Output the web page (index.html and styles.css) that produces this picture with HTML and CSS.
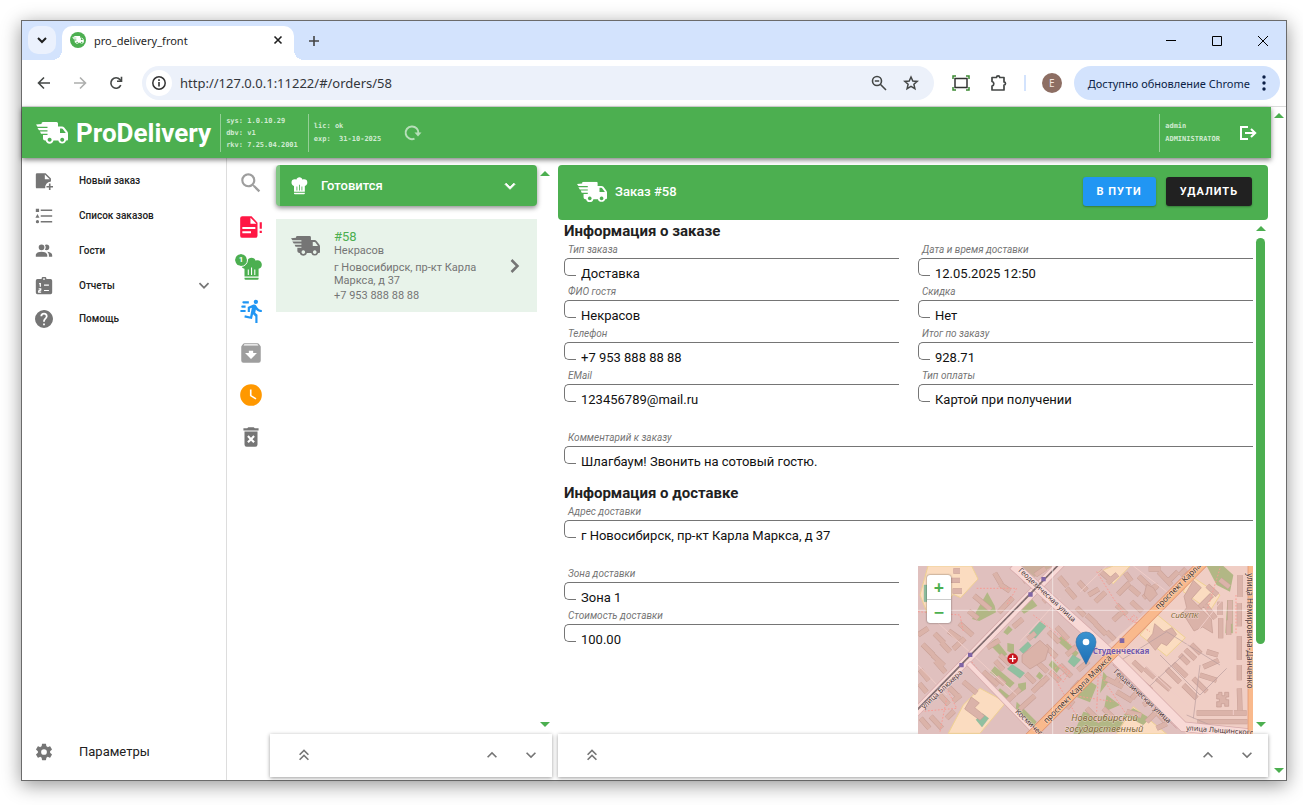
FILE: index.html
```html
<!DOCTYPE html>
<html lang="ru">
<head>
<meta charset="utf-8">
<title>pro_delivery_front</title>
<link rel="stylesheet" href="styles.css">
</head>
<body>
<svg class="sprite" aria-hidden="true">
  <symbol id="truck" viewBox="0 0 32 22">
    <path fill-rule="evenodd" d="M5.500 2V1.500Q5.500 0 7 0H20.500Q22 0 22 1.500V4.500H26Q27.300 4.500 28.200 5.500L31 9Q32 10.200 32 11.500V17.500Q32 18.600 31 18.600H30A4 4 0 0 1 22.300 18.600H17.500A4 4 0 0 1 9.700 18.600H9Q7 18.600 7 16.600V13H11.500V11.800H5L4 9.500H11.500V8.200H3L1.500 6H11.500V4.700H1.500L0 2.500ZM24 6.500V11H29.800L26.800 6.900Q26.500 6.500 26 6.500ZM13.600 15.800a2 2 0 1 0 .01 0ZM26.200 15.800a2 2 0 1 0 .01 0Z"/>
  </symbol>
  <symbol id="chef" viewBox="0 0 24 24"><path d="M12.500 1.500C10.730 1.500 9.170 2.670 8.670 4.370C8.140 4.130 7.580 4 7 4A4 4 0 0 0 3 8C3 9.820 4.240 11.410 6 11.870V19H19V11.870C20.760 11.410 22 9.820 22 8A4 4 0 0 0 18 4C17.420 4 16.860 4.130 16.330 4.370C15.830 2.670 14.270 1.500 12.500 1.500M12 10.500H13V17.500H12V10.500M9 12.500H10V17.500H9V12.500M15 12.500H16V17.500H15V12.500M6 20V21A1 1 0 0 0 7 22H18A1 1 0 0 0 19 21V20H6Z"/></symbol>
  <symbol id="down" viewBox="0 0 24 24"><path d="M7.410 8.580L12 13.170L16.590 8.580L18 10L12 16L6 10L7.410 8.580Z"/></symbol>
  <symbol id="up" viewBox="0 0 24 24"><path d="M7.410 15.410L12 10.830L16.590 15.410L18 14L12 8L6 14L7.410 15.410Z"/></symbol>
  <symbol id="dblup" viewBox="0 0 24 24"><path d="M7.410 18.410L6 17L12 11L18 17L16.590 18.410L12 13.830L7.410 18.410M7.410 12.410L6 11L12 5L18 11L16.590 12.410L12 7.830L7.410 12.410Z"/></symbol>
</svg>

<div class="window">
  <div class="tabstrip">
    <button class="tab-search" aria-label="Поиск вкладок"><svg width="12" height="12" viewBox="0 0 12 12" fill="none" stroke="#1f1f1f" stroke-width="2"><path d="M2 4l4 4 4-4"/></svg></button>
    <div class="tab">
      <svg width="16" height="16" viewBox="0 0 16 16"><circle cx="8" cy="8" r="8" fill="#4caf50"/><svg x="2" y="4" width="12" height="8" fill="#fff"><use href="#truck"/></svg></svg>
      <span class="tab-title">pro_delivery_front</span>
      <button class="plain" aria-label="Закрыть вкладку"><svg width="10" height="10" viewBox="0 0 10 10" stroke="#1f1f1f" stroke-width="1.600"><path d="M1.500 1.500l7 7M8.500 1.500L1.500 8.500"/></svg></button>
    </div>
    <button class="plain new-tab" aria-label="Новая вкладка"><svg width="12" height="12" viewBox="0 0 12 12" stroke="#444" stroke-width="1.600"><path d="M6 1v10M1 6h10"/></svg></button>
    <div class="win-controls">
      <button class="plain" aria-label="Свернуть"><svg width="12" height="12" viewBox="0 0 12 12" stroke="#000"><path d="M1 5.500h10"/></svg></button>
      <button class="plain" aria-label="Развернуть"><svg width="12" height="12" viewBox="0 0 12 12" stroke="#000" fill="none"><path d="M1.500 1.500h9v9h-9z"/></svg></button>
      <button class="plain" aria-label="Закрыть"><svg width="12" height="12" viewBox="0 0 12 12" stroke="#000"><path d="M1 1l10 10M11 1L1 11"/></svg></button>
    </div>
  </div>

  <div class="toolbar">
    <div class="nav-buttons">
      <button class="plain" aria-label="Назад"><svg width="14" height="14" viewBox="0 0 14 14" fill="none" stroke="#444746" stroke-width="1.600"><path d="M13 7H2M7 1.500L1.500 7L7 12.500"/></svg></button>
      <button class="plain" aria-label="Вперёд"><svg width="14" height="14" viewBox="0 0 14 14" fill="none" stroke="#adaead" stroke-width="1.600"><path d="M1 7h11M7 1.500L12.500 7L7 12.500"/></svg></button>
      <button class="plain" aria-label="Обновить"><svg width="14" height="14" viewBox="0 0 14 14" fill="none" stroke="#444746" stroke-width="1.600"><path d="M11.800 9.200A5.200 5.200 0 1 1 11 3.600L12.200 4.900"/><path d="M12.500 .8V5.300H8"/></svg></button>
    </div>
    <div class="omnibox">
      <button class="site-info" aria-label="Сведения о сайте"><svg width="16" height="16" viewBox="0 0 16 16" fill="none" stroke="#333" stroke-width="2"><circle cx="8" cy="8" r="6.200" stroke-width="1.500"/><path d="M8 7v4.500M8 4.300v1.700" stroke-width="1.600"/></svg></button>
      <input class="url" aria-label="Адрес" value="http://127.0.0.1:11222/#/orders/58">
      <button class="plain" aria-label="Масштаб"><svg width="16" height="16" viewBox="0 0 16 16" fill="none" stroke="#444746" stroke-width="1.600"><circle cx="6" cy="6" r="4.500"/><path d="M9.300 9.300L15 15M3.800 6h4.400"/></svg></button>
      <button class="plain" aria-label="Закладка"><svg width="16" height="16" viewBox="0 0 16 16" fill="none" stroke="#444746" stroke-width="1.500"><path d="M8 2l1.800 4 4.400.4-3.300 2.900 1 4.300L8 11.300l-3.900 2.300 1-4.300L1.800 6.400 6.200 6z"/></svg></button>
    </div>
    <button class="plain" aria-label="Снимок экрана"><svg width="18" height="16" viewBox="0 0 18 16" fill="none"><path d="M3 3.500h12v9H3z" stroke="#333" stroke-width="1.500"/><path d="M1 4V1h3M14 1h3v3M17 12v3h-3M4 15H1v-3" stroke="#3c8a33" stroke-width="1.500"/></svg></button>
    <button class="plain extensions" aria-label="Расширения"><svg width="18" height="18" viewBox="0 0 18 18" fill="none" stroke="#444746" stroke-width="1.700" stroke-linejoin="round"><path d="M2 3.500h4.500a1.500 1.500 0 0 1 3.200 0H14V8a1.500 1.500 0 0 1 0 3v5H2v-4a2.300 2.300 0 0 0 0-4.500z"/></svg></button>
    <span class="tool-divider"></span>
    <button class="avatar" aria-label="Профиль">E</button>
    <button class="update"><span>Доступно обновление Chrome</span><svg width="4" height="16" viewBox="0 0 4 16" fill="#0b1f47"><circle cx="2" cy="2" r="1.700"/><circle cx="2" cy="8" r="1.700"/><circle cx="2" cy="14" r="1.700"/></svg></button>
  </div>

  <div class="viewport">
    <div class="app">
      <header class="app-bar">
        <svg class="logo" viewBox="0 0 32 22"><use href="#truck"/></svg>
        <h1>ProDelivery</h1>
        <div class="meta meta-system"><span>sys: 1.0.10.29</span><span>dbv: v1</span><span>rkv: 7.25.04.2001</span></div>
        <div class="meta meta-license"><span>lic: ok</span><span>exp:&nbsp; 31-10-2025</span></div>
        <button class="plain reload" aria-label="Обновить"><svg width="18" height="16" viewBox="0 0 18 16" fill="none" stroke="#b7dfb9" stroke-width="2"><path d="M10.500 13.700A6.400 6.400 0 1 1 14.400 8.500"/><path d="M10.500 7.500h7l-3.500 4z" fill="#b7dfb9" stroke="none"/></svg></button>
        <div class="meta meta-user"><span>admin</span><span>ADMINISTRATOR</span></div>
        <button class="plain logout" aria-label="Выйти"><svg width="18" height="16" viewBox="0 0 18 16" fill="none" stroke="#fff" stroke-width="2"><path d="M9 2H2v12h7M6 8h10M12 4l4.200 4L12 12"/></svg></button>
      </header>

      <div class="workspace">
        <nav class="sidebar">
          <a href="#new"><svg class="ico" viewBox="1 1 22 22"><path d="M3.500 2.500H14L20.500 9V12.500Q13 13.500 13.500 21H3.500Q2 21 2 19.500V4Q2 2.500 3.500 2.500M13 4v6h6zM18 15h2v3h3v2h-3v3h-2v-3h-3v-2h3z" fill-rule="evenodd"/></svg><span>Новый заказ</span></a>
          <a href="#list"><svg class="ico" viewBox="1 1 22 22"><path d="M4 9.500L6.500 14H1.500L4 9.500M2 3H6V7H2V3M4 21A2 2 0 0 0 6 19A2 2 0 0 0 4 17A2 2 0 0 0 4 21M8 4V6H22V4H8M8 20H22V18H8V20M8 13H22V11H8V13Z"/></svg><span>Список заказов</span></a>
          <a href="#guests"><svg class="ico" viewBox="1 1 22 22"><path d="M16 17V19H2V17S2 13 9 13 16 17 16 17M12.500 7.500A3.500 3.500 0 1 0 9 11A3.500 3.500 0 0 0 12.500 7.500M15.940 13A5.320 5.320 0 0 1 18 17V19H22V17S22 13.370 15.940 13M15 4A3.390 3.390 0 0 0 13.070 4.590A5 5 0 0 1 13.070 10.410A3.390 3.390 0 0 0 15 11A3.500 3.500 0 0 0 15 4Z"/></svg><span>Гости</span></a>
          <a href="#reports"><svg class="ico" viewBox="1 1 22 22"><path d="M4 3.500h5a3 3 0 0 1 6 0h5q2 0 2 2V20q0 2-2 2H4q-2 0-2-2V5.500q0-2 2-2M12 2.500a1 1 0 1 0 .01 0" fill-rule="evenodd"/><path d="M6 9h1.500v4M5.500 15.500h2.500v1.500l-2.500 1v1.500h3M12 11h6M12 17.500h6" fill="none" stroke="#fff" stroke-width="1.500"/></svg><span>Отчеты</span><svg class="expand" viewBox="5 7 14 10"><use href="#down" x="0" y="0" width="24" height="24"/></svg></a>
          <a class="help" href="#help"><svg class="ico" viewBox="2 2 20 20"><path d="M15.070 11.250L14.170 12.170C13.450 12.890 13 13.500 13 15H11V14.500C11 13.390 11.450 12.390 12.170 11.670L13.410 10.410C13.780 10.050 14 9.550 14 9C14 7.890 13.100 7 12 7A2 2 0 0 0 10 9H8A4 4 0 0 1 12 5A4 4 0 0 1 16 9C16 9.880 15.640 10.670 15.070 11.250M13 19H11V17H13M12 2A10 10 0 0 0 2 12A10 10 0 0 0 12 22A10 10 0 0 0 22 12C22 6.470 17.500 2 12 2Z"/></svg><span>Помощь</span></a>
          <a class="settings" href="#settings"><svg class="ico" viewBox="1 1 22 22"><path d="M12 15.500A3.500 3.500 0 0 1 8.500 12A3.500 3.500 0 0 1 12 8.500A3.500 3.500 0 0 1 15.500 12A3.500 3.500 0 0 1 12 15.500M19.430 12.970C19.470 12.650 19.500 12.330 19.500 12C19.500 11.670 19.470 11.340 19.430 11L21.540 9.370C21.730 9.220 21.780 8.950 21.660 8.730L19.660 5.270C19.540 5.050 19.270 4.960 19.050 5.050L16.560 6.050C16.040 5.660 15.500 5.320 14.870 5.070L14.500 2.420C14.460 2.180 14.250 2 14 2H10C9.750 2 9.540 2.180 9.500 2.420L9.130 5.070C8.500 5.320 7.960 5.660 7.440 6.050L4.950 5.050C4.730 4.960 4.460 5.050 4.340 5.270L2.340 8.730C2.210 8.950 2.270 9.220 2.460 9.370L4.570 11C4.530 11.340 4.500 11.670 4.500 12C4.500 12.330 4.530 12.650 4.570 12.970L2.460 14.630C2.270 14.780 2.210 15.050 2.340 15.270L4.340 18.730C4.460 18.950 4.730 19.030 4.950 18.950L7.440 17.940C7.960 18.340 8.500 18.680 9.130 18.930L9.500 21.580C9.540 21.820 9.750 22 10 22H14C14.250 22 14.460 21.820 14.500 21.580L14.870 18.930C15.500 18.670 16.040 18.340 16.560 17.940L19.050 18.950C19.270 19.030 19.540 18.950 19.660 18.730L21.660 15.270C21.780 15.050 21.730 14.780 21.540 14.630L19.430 12.970Z"/></svg><span>Параметры</span></a>
        </nav>

        <div class="rail">
          <button class="plain grey search" aria-label="Поиск"><svg viewBox="0 0 24 24"><path d="M9.500 3A6.500 6.500 0 0 1 16 9.500C16 11.110 15.410 12.590 14.440 13.730L14.710 14H15.500L20.500 19L19 20.500L14 15.500V14.710L13.730 14.440C12.590 15.410 11.110 16 9.500 16A6.500 6.500 0 0 1 3 9.500A6.500 6.500 0 0 1 9.500 3M9.500 5C7 5 5 7 5 9.500C5 12 7 14 9.500 14C12 14 14 12 14 9.500C14 7 12 5 9.500 5Z"/></svg></button>
          <button class="plain red" aria-label="Новые"><svg viewBox="0 0 24 24"><path fill-rule="evenodd" d="M3 2H12.500L18 8V20Q18 22 16 22H4Q2 22 2 20V4Q2 2 4 2M11.500 3.500V9H17ZM4 12V13.800H16V12ZM4 16V17.800H12V16ZM20 7.500H22V13.500H20ZM20 15.500H22V17.500H20Z"/></svg></button>
          <button class="plain green" aria-label="Готовится"><svg viewBox="0 0 24 24"><use href="#chef"/></svg><span class="badge">1</span></button>
          <button class="plain blue" aria-label="В пути"><svg viewBox="0 0 24 24"><path d="M16.500 5.500A2 2 0 0 0 18.500 3.500A2 2 0 0 0 16.500 1.500A2 2 0 0 0 14.500 3.500A2 2 0 0 0 16.500 5.500M12.900 19.400L13.900 15L16 17V23H18V15.500L15.900 13.500L16.500 10.500C17.890 12.090 19.890 13 22 13V11C20.240 11.030 18.600 10.110 17.700 8.600L16.700 7C16.340 6.400 15.700 6 15 6C14.700 6 14.500 6.100 14.200 6.100L9 8.300V13H11V9.600L12.800 8.900L11.200 17L6.300 16L5.900 18L12.900 19.400M4 9A1 1 0 0 1 3 8A1 1 0 0 1 4 7H7V9H4M5 5A1 1 0 0 1 4 4A1 1 0 0 1 5 3H10V5H5M3 13A1 1 0 0 1 2 12A1 1 0 0 1 3 11H7V13H3Z"/></svg></button>
          <button class="plain grey" aria-label="Архив"><svg viewBox="0 0 24 24"><path d="M5.120 5L5.930 4H17.930L18.870 5M12 17.500L6.500 12H10V10H14V12H17.500L12 17.500M20.540 5.230L19.150 3.550C18.880 3.210 18.470 3 18 3H6C5.530 3 5.120 3.210 4.840 3.550L3.460 5.230C3.170 5.570 3 6 3 6.500V19A2 2 0 0 0 5 21H19A2 2 0 0 0 21 19V6.500C21 6 20.830 5.570 20.540 5.230Z"/></svg></button>
          <button class="plain orange" aria-label="Ожидание"><svg viewBox="0 0 24 24"><path d="M12 2A10 10 0 0 0 2 12A10 10 0 0 0 12 22A10 10 0 0 0 22 12A10 10 0 0 0 12 2M16.200 16.200L11 13V7H12.500V12.200L17 14.900L16.200 16.200Z"/></svg></button>
          <button class="plain dark" aria-label="Удалённые"><svg viewBox="0 0 24 24"><path d="M6 19A2 2 0 0 0 8 21H16A2 2 0 0 0 18 19V7H6V19M8.460 11.880L9.870 10.470L12 12.590L14.120 10.470L15.530 11.880L13.410 14L15.530 16.120L14.120 17.530L12 15.410L9.880 17.530L8.470 16.120L10.590 14L8.460 11.880M15.500 4L14.500 3H9.500L8.500 4H5V6H19V4H15.500Z"/></svg></button>
        </div>

        <section class="orders">
          <div class="pane">
            <div class="orders-list">
              <button class="group"><svg width="20" height="20" viewBox="0 0 24 24"><use href="#chef"/></svg><span>Готовится</span><svg width="20" height="20" viewBox="0 0 24 24" stroke="#fff"><use href="#down"/></svg></button>
              <a class="order" href="#58">
                <svg class="order-truck" viewBox="0 0 32 22"><use href="#truck"/></svg>
                <div class="order-text"><span class="order-number">#58</span><span>Некрасов</span><span class="order-address">г Новосибирск, пр-кт Карла Маркса, д 37</span><span>+7 953 888 88 88</span></div>
                <svg class="order-arrow" width="10" height="14" viewBox="0 0 10 14" fill="none" stroke="#757575" stroke-width="2.500"><path d="M1.500 1L7.500 7L1.500 13"/></svg>
              </a>
            </div>
            <div class="scrollbar"><i class="arrow-up"></i><i class="arrow-down"></i></div>
          </div>
          <div class="pager"><button class="plain" aria-label="В начало"><svg viewBox="0 0 24 24"><use href="#dblup"/></svg></button><button class="plain push" aria-label="Вверх"><svg viewBox="0 0 24 24"><use href="#up"/></svg></button><button class="plain" aria-label="Вниз"><svg viewBox="0 0 24 24"><use href="#down"/></svg></button></div>
        </section>

        <main class="detail">
          <div class="detail-bar"><svg viewBox="0 0 32 22"><use href="#truck"/></svg><h2>Заказ #58</h2><button class="action">В ПУТИ</button><button class="action action-delete">УДАЛИТЬ</button></div>
          <div class="pane">
            <form class="form">
              <h3>Информация о заказе</h3>
              <div class="grid">
                <div class="field"><label for="f1">Тип заказа</label><div class="control"><input id="f1" readonly value="Доставка"></div></div>
                <div class="field"><label for="f2">Дата и время доставки</label><div class="control"><input id="f2" readonly value="12.05.2025 12:50"></div></div>
                <div class="field"><label for="f3">ФИО гостя</label><div class="control"><input id="f3" readonly value="Некрасов"></div></div>
                <div class="field"><label for="f4">Скидка</label><div class="control"><input id="f4" readonly value="Нет"></div></div>
                <div class="field"><label for="f5">Телефон</label><div class="control"><input id="f5" readonly value="+7 953 888 88 88"></div></div>
                <div class="field"><label for="f6">Итог по заказу</label><div class="control"><input id="f6" readonly value="928.71"></div></div>
                <div class="field"><label for="f7">EMail</label><div class="control"><input id="f7" readonly value="123456789@mail.ru"></div></div>
                <div class="field"><label for="f8">Тип оплаты</label><div class="control"><input id="f8" readonly value="Картой при получении"></div></div>
              </div>
              <div class="field spaced"><label for="f9">Комментарий к заказу</label><div class="control"><input id="f9" readonly value="Шлагбаум! Звонить на сотовый гостю."></div></div>
              <h3 class="second">Информация о доставке</h3>
              <div class="field"><label for="f10">Адрес доставки</label><div class="control"><input id="f10" readonly value="г Новосибирск, пр-кт Карла Маркса, д 37"></div></div>
              <div class="grid grid-map">
                <div class="stack">
                  <div class="field"><label for="f11">Зона доставки</label><div class="control"><input id="f11" readonly value="Зона 1"></div></div>
                  <div class="field"><label for="f12">Стоимость доставки</label><div class="control"><input id="f12" readonly value="100.00"></div></div>
                </div>
                <div class="map">
                  <svg class="map-canvas" viewBox="54 33 1005 504" preserveAspectRatio="xMidYMid slice" role="img" aria-label="Карта">
                    <defs>
                      <linearGradient id="pin" x1="0" y1="0" x2="0" y2="1"><stop offset="0" stop-color="#3a93d0"/><stop offset="1" stop-color="#1f6fb5"/></linearGradient>
                      <path id="houses" d="M146 228l34 24M104 236l28 28M68 268l32 32M98 300l34 32M124 262l26 28M178 205l40 36M160 282l34-32M206 168l28 22M222 122l50 42M284 54l20 34M300 88l30 20M338 128l-42 44M366 60l14 22M152 76h28M158 108h28M160 48h20M60 344l26 32M106 318l30 34M58 386l22 26M120 420l26 28M148 398l28 28M160 438l22-18M62 490l26 30M92 484l34 36M140 490l22-22M54 240l30-20M190 380l40 34M250 350l44 40M290 366l24 22M262 278l36-22M300 300l30 28M286 318l24 26M320 440l40-38M360 462l44-40M398 410l34-34M420 390l24-24M340 216l28-24M384 252l22-18M446 230l32 32M470 216l34 36M436 272l34 34M500 300l30-26M534 346l32-28M480 330l34 34M450 350l30 28M410 320l32 30M378 356l26 26M406 60l30-20M430 140l22-20M478 66l24 28M500 100l26 30M536 80l24 26M566 120l30-18M586 140l30-28M600 48l34 30M622 84l30-26M650 150l30 28M676 54l18 24M690 96l28 24M716 64l32 30M740 108l34-18M694 140l32 30M654 118l34-34M640 196l26-24M586 206l32 32M620 230l24 24M560 180l28 26M530 158l24 24M776 50l38 40M800 84l34-34M840 60l18-18M746 42l36 0M730 128l40-34M960 74l28 22M922 92l30 28M936 120l-50 50M916 150l30 40M960 140v40M990 136v70M1020 60v66M1018 144v70M1018 244v70M1018 330v46M1018 400l2 66M986 196v44M962 190v60M890 474h150M892 500h150M900 360l50 16M880 370l40 40M910 336l46-20M920 290l34 10M840 300l26 26M856 284l30 28M874 268l28 28M820 326l40 38M800 342l40 40M850 390l40 40M700 320l30 28M734 340l30 28M724 380l30 26M770 370l40 34M680 336l-30 44M618 370l50 26M650 410l46 28M696 430l26-30M680 470l44 12M740 500l30-30M610 460l30 28M770 520l30-14M540 380l-24 26M500 460l20-24M440 500l26-22M560 460l40 40M730 450l36-20M760 462l34 36M800 464l30 30"/>
                    </defs>
                    <rect x="54" y="33" width="1005" height="504" fill="#e0c0be"/>
                    <path fill="#f0cec5" d="M900 33H1059V537H860L600 290Z"/>
                    <g fill="#fbdcc0" stroke="#efd193" stroke-width="3">
                      <path d="M84 33H215L234 72L182 128L160 118L128 160L84 180L60 120Z"/>
                      <path d="M240 400L318 442L240 535H145L190 450Z"/>
                      <path d="M596 50L640 33H690L640 86Z"/>
                      <path d="M770 178L856 248L800 303L720 240Z"/>
                      <path d="M868 60L960 120L930 168L850 110Z"/>
                      <path d="M700 455L800 537H650Z"/>
                    </g>
                    <g fill="#b2b785">
                      <path d="M920 33H970L1000 60L990 110L950 90Z"/><path d="M982 135h18v100h-24z"/>
                      <path d="M262 112l22 40 4 20-50 26-22-6z"/><path d="M396 132l16 20-40 24-16-16z"/><path d="M326 212l12 12-16 16-12-8zM322 264l20 4v30l-20-10zM286 252l-18 16 40 40 14-10zM284 334l60 50-14 14-60-46zM300 400l30 24-12 14-30-24zM354 386l24-4v20l-22 14z"/>
                      <path d="M484 244l52 50-10 12-56-50zM456 316l24 24-10 14-24-24zM418 350l12 12-10 12-12-10z"/>
                      <path d="M560 372l30 20-20 50-50-20zM610 350l20 24-30 40zM620 420l40 30-50 22zM700 460l50 30-20 20-60-30z"/>
                      <path d="M350 440l60 60-14 20-50-50zM550 470l120 30-20 30-130 7z"/>
                    </g>
                    <path fill="#cbae9b" d="M360 33H460L404 66Z"/>
                    <g fill="#90c0a0" stroke="#82ad92">
                      <path d="M420 200l18 14-32 36-18-14zM384 260l10 12-24 24-12-12zM336 328l38 26-14 16-38-28zM518 300l24 14-20 22-18-16zM228 494l20-18 18 14-20 26zM72 90h10v50h-10z"/>
                    </g>
                    <use href="#houses" fill="none" stroke="#c8a097" stroke-width="16"/>
                    <use href="#houses" fill="none" stroke="#dbb3a9" stroke-width="13"/>
                    <g fill="#dbb3a9" stroke="#c49b92" stroke-width="2">
                      <path d="M366 300l54-44 26 24-10 34-46 28-24-20z"/><path d="M880 76l24 22-30 34 60 60 4 42-30-18-26 12-34-54 12-16-8-34z"/>
                      <path d="M764 206l28 24 24-12 14 20-30 34-16-8-18 22-24-30 16-20z"/>
                      <path d="M740 88l20 10 12 20-22 22-18-20z"/><path d="M956 412h10v10h8v-10h12v14h-8v8h8v20h-12v-8h-10v10h-14v-16h8v-8h-8v-14h6z"/>
                      <path d="M214 426l24 18-14 14 30 24-14 14-46-34z"/>
                    </g>
                    <g fill="none" stroke="#b79b9d" stroke-width="2">
                      <path d="M640 330L800 230L960 330M780 300L900 420L980 340M860 480L1000 540M720 420L850 300M900 330L880 490"/>
                    </g>
                    <g fill="none" stroke="#f0cdc8" stroke-width="3">
                      <path d="M110 200L350 420M54 330L140 420M480 130L360 260M620 33L540 110M800 110L700 33M680 280L860 450M970 130L860 270M1000 100V480"/>
                    </g>
                    <g fill="none" stroke="#f89b94" stroke-width="3" stroke-dasharray="5 5">
                      <path d="M230 100H350L320 150M54 170L180 180L190 230M215 320L300 430M54 470L170 460L130 380M120 530L140 430M590 50L640 130L690 200M590 470L595 350L680 480M470 380L540 500M400 180L540 290M450 300L500 350L470 370M960 40L920 170M690 190L750 230M510 420L640 440M1008 120V240"/>
                      <path d="M480 330l30 20-20 30-40-30 30-20M700 180l14 10-10 14-14-10z"/>
                    </g>
                    <g fill="none" stroke-linecap="square">
                      <path d="M54 465L475 33" stroke="#d5a9aa" stroke-width="27"/><path d="M54 465L475 33" stroke="#f8d9d6" stroke-width="23"/>
                      <path d="M210 330L410 537" stroke="#d5a9aa" stroke-width="17"/><path d="M210 330L410 537" stroke="#f8d9d6" stroke-width="13"/>
                      <path d="M350 40L620 285L850 515L1059 537" stroke="#d5a9aa" stroke-width="31"/><path d="M350 40L620 285L850 515L1059 537" stroke="#f8d9d6" stroke-width="27"/>
                      <path d="M640 330L830 520" stroke="#c58d90" stroke-width="2" stroke-dasharray="12 4"/>
                      <path d="M392 543L905 28" stroke="#df8f6c" stroke-width="30"/><path d="M1053 33V537" stroke="#df8f6c" stroke-width="20"/>
                      <path d="M392 543L905 28" stroke="#f9b98c" stroke-width="26"/><path d="M1053 33V537" stroke="#f9b98c" stroke-width="16"/>
                      <path d="M54 462L475 30" stroke="#7a6668" stroke-width="5"/><path d="M54 462L475 30" stroke="#a99294" stroke-width="1" stroke-dasharray="9 9"/>
                    </g>
                    <path d="M458 33V537M54 166H1059" stroke="#fff" stroke-opacity=".5" stroke-width="3"/>
                    <path fill="#8065a5" d="M424 66h13v13h-13zM385 112h13v13h-13zM204 293h13v13h-13zM178 324h13v13h-13zM659 250h14v14h-14z"/>
                    <circle cx="338" cy="311" r="16" fill="#c8171e"/><path d="M338 301v20M328 311h20" stroke="#fff" stroke-width="4"/>
                    <g class="map-street">
                      <text x="354" y="48" transform="rotate(43 354 48)">Геодезическая улица</text>
                      <text x="640" y="352" transform="rotate(43 640 352)">Геодезическая улица</text>
                      <text x="72" y="463" transform="rotate(-43 72 463)">улица Блюхера</text>
                      <text x="344" y="472" transform="rotate(43 344 472)">Космическая</text>
                      <text x="858" y="526" transform="rotate(4 858 526)">улица Лыщинского</text>
                      <text class="map-long" x="1041" y="55" transform="rotate(90 1041 55)">улица Немировича-Данченко</text>
                    </g>
                    <g class="map-avenue">
                      <text x="440" y="506" transform="rotate(-45 440 506)">проспект Карла Маркса</text>
                      <text x="775" y="164" transform="rotate(-45 775 164)">проспект Карла Маркса</text>
                    </g>
                    <g class="map-place"><text x="812" y="189">СибУПК</text></g>
                    <g class="map-place map-university"><text x="514" y="498">Новосибирский</text><text x="495" y="530">государственный</text></g>
                    <text class="map-metro" x="578" y="298">Студенческая</text>
                    <path d="M558 328L536 286Q528 272 528 261A30 30 0 0 1 588 261Q588 272 580 286Z" fill="url(#pin)" stroke="#2a6ea8" stroke-width="2"/><circle cx="558" cy="261" r="10" fill="#fff"/>
                  </svg>
                  <div class="map-zoom"><button type="button" aria-label="Приблизить">+</button><button type="button" aria-label="Отдалить">−</button></div>
                </div>
              </div>
            </form>
            <div class="scrollbar"><i class="arrow-up"></i><div class="track"><i class="thumb"></i></div><i class="arrow-down"></i></div>
          </div>
          <div class="pager"><button class="plain" aria-label="В начало"><svg viewBox="0 0 24 24"><use href="#dblup"/></svg></button><button class="plain push" aria-label="Вверх"><svg viewBox="0 0 24 24"><use href="#up"/></svg></button><button class="plain" aria-label="Вниз"><svg viewBox="0 0 24 24"><use href="#down"/></svg></button></div>
        </main>
      </div>
    </div>
    <div class="scrollbar page-scroll"><i class="arrow-up"></i><i class="arrow-down"></i></div>
  </div>
</div>
</body>
</html>
```
FILE: styles.css
```css
* { box-sizing: border-box; }
body { margin: 0; padding: 20px 16px 24px 21px; min-height: 100vh; display: flex; background: #fff; font-family: Roboto, "Noto Sans", sans-serif; color: #212121; }
h1, h2, h3 { margin: 0; }
button, input { font-family: inherit; }
a { color: inherit; text-decoration: none; }
svg { display: block; flex: none; }
.sprite { position: absolute; width: 0; height: 0; }
.plain { display: flex; align-items: center; justify-content: center; padding: 0; border: 0; background: none; }

.window { flex: 1; min-width: 0; display: flex; flex-direction: column; border: 1px solid #6b6b6b; background: #fff; box-shadow: 0 4px 18px rgba(0, 0, 0, .42); }

/* Browser frame */
.tabstrip { display: flex; align-items: center; height: 39px; padding-left: 6px; background: #d3e3fd; font-family: "Noto Sans", sans-serif; }
.tab-search { display: flex; align-items: center; justify-content: center; width: 28px; height: 28px; margin-bottom: 1px; padding: 0; border: 0; border-radius: 10px; background: #ebf1fd; }
.tab { position: relative; align-self: flex-end; display: flex; align-items: center; gap: 8px; width: 232px; height: 34px; margin-left: 6px; padding: 0 11px 6px 8px; border-radius: 10px 10px 0 0; background: #fff; }
.tab::before, .tab::after { content: ""; position: absolute; bottom: 0; width: 10px; height: 10px; }
.tab::before { left: -10px; background: radial-gradient(circle at 0 0, transparent 10px, #fff 10px); }
.tab::after { right: -10px; background: radial-gradient(circle at 100% 0, transparent 10px, #fff 10px); }
.tab-title { flex: 1; font-size: 11px; color: #1f1f1f; }
.new-tab { margin-left: 14px; }
.win-controls { display: flex; gap: 34px; margin-left: auto; padding-right: 17px; }
.toolbar { display: flex; align-items: center; height: 47px; padding: 0 6px 0 15px; border-bottom: 1px solid #dcdcdc; background: #fff; font-family: "Noto Sans", sans-serif; }
.nav-buttons { display: flex; gap: 22px; margin-right: 19px; }
.omnibox { flex: 1; min-width: 0; display: flex; align-items: center; gap: 16px; height: 34px; padding: 0 15px 0 4px; border-radius: 17px; background: #ecf1fa; }
.site-info { display: flex; align-items: center; justify-content: center; width: 26px; height: 26px; padding: 0; border: 0; border-radius: 13px; background: #fff; }
.url { flex: 1; min-width: 0; margin-left: -8px; padding: 0; border: 0; background: none; font-size: 13px; color: #33363a; outline: 0; }
.omnibox + .plain { margin-left: 18px; }
.extensions { margin-left: 20px; }
.tool-divider { width: 2px; height: 16px; margin-left: 16px; background: #d3e3fd; }
.avatar { width: 20px; height: 20px; margin-left: 16px; padding: 0; border: 0; border-radius: 10px; background: #8d6e63; color: #f3e5e0; font-size: 10px; }
.update { display: flex; align-items: center; gap: 12px; height: 34px; margin-left: 12px; padding: 0 14px; border: 0; border-radius: 17px; background: #d3e3fd; color: #0b1f47; font-size: 11px; white-space: nowrap; }

.viewport { flex: 1; min-height: 0; display: flex; }
.app { flex: 1; min-width: 0; display: flex; flex-direction: column; }
.scrollbar { width: 15px; flex: none; display: flex; flex-direction: column; align-items: center; justify-content: space-between; padding: 6px 0 7px; }
.arrow-up, .arrow-down { border: 5px solid transparent; }
.arrow-up { border-top: 0; border-bottom-color: #4caf50; }
.arrow-down { border-bottom: 0; border-top-color: #4caf50; }
.track { flex: 1; width: 9px; margin: 7px 0 6px; }
.thumb { display: block; height: 85%; border-radius: 5px; background: #4caf50; }

/* Application bar */
.app-bar { position: relative; z-index: 1; display: flex; align-items: center; height: 51px; padding: 0 14px; background: #4caf50; color: #fff; box-shadow: 0 2px 5px rgba(0, 0, 0, .5); }
.logo { width: 32px; height: 22px; fill: #fff; }
.app-bar h1 { margin: 0 9px 0 8px; font-size: 26px; line-height: 32px; font-weight: 700; }
.meta { display: flex; flex-direction: column; justify-content: center; height: 38px; padding-left: 5px; border-left: 1px solid #94cf96; font: 700 7px/13px "DejaVu Sans Mono", monospace; color: #d2ebd3; white-space: nowrap; }
.meta-system { margin-right: 10px; line-height: 12px; }
.reload { margin-left: 23px; }
.meta-user { margin-left: auto; }
.logout { margin-left: 19px; }

.workspace { flex: 1; min-height: 0; display: flex; }
.sidebar { flex: none; width: 205px; display: flex; flex-direction: column; padding: 5px 16px 11px 12px; border-right: 1px solid #ddd; font-size: 10px; font-weight: 500; }
.sidebar a { display: flex; align-items: center; gap: 25px; height: 35px; }
.ico { width: 20px; height: 20px; padding: 1px; fill: #757575; }
.expand { width: 12px; height: 9px; margin-left: auto; fill: #757575; }
.sidebar .help { height: 31px; }
.sidebar .settings { margin-top: auto; font-size: 13px; font-weight: 400; }
.rail { flex: none; width: 43px; display: flex; flex-direction: column; align-items: center; gap: 16px; padding: 12px 0 0 5px; }
.rail .plain { position: relative; width: 26px; height: 26px; }
.rail .search { margin-bottom: 2px; }
.rail svg { width: 26px; height: 26px; fill: currentColor; }
.grey { color: #9e9e9e; }
.red { color: #ff1744; }
.green { color: #4caf50; }
.blue { color: #2196f3; }
.orange { color: #ff9800; }
.dark { color: #757575; }
.badge { position: absolute; left: -3px; top: -2px; width: 12px; height: 12px; border-radius: 6px; outline: 1px solid #fff; background: #4caf50; color: #fff; font-size: 8px; line-height: 12px; font-weight: 700; text-align: center; }

/* Orders column */
.orders { flex: 0 1 282px; display: flex; flex-direction: column; padding: 7px 0 3px; }
.pane { flex: 1; min-height: 0; display: flex; overflow: hidden; }
.orders-list { flex: 1; padding-left: 6px; display: flex; flex-direction: column; gap: 13px; }
.group { display: flex; align-items: center; gap: 12px; height: 41px; padding: 0 17px 0 9px; border: 0; border-left: 4px solid #81c784; border-radius: 4px; background: #4caf50; color: #fff; fill: #fff; font-size: 13px; font-weight: 500; box-shadow: 0 2px 5px rgba(0, 0, 0, .45); }
.group span { flex: 1; text-align: left; }
.order { display: flex; gap: 14px; padding: 10px 17px 10px 15px; background: #e8f3ea; color: #757575; font-size: 11px; line-height: 13px; }
.order-truck { width: 29px; height: 20px; margin-top: 7px; fill: #757575; }
.order-text { flex: 1; min-width: 0; display: flex; flex-direction: column; padding-right: 10px; }
.order-number { color: #4caf50; font-size: 13px; line-height: 15px; }
.order-address { margin: 4px 0 2px; }
.order-arrow { align-self: center; }
.pager { flex: none; display: flex; align-items: center; gap: 19px; height: 43px; padding: 0 11px 2px 24px; background: #fff; box-shadow: 0 1px 4px rgba(0, 0, 0, .4); }
.pager svg { width: 20px; height: 20px; fill: #757575; }
.push { margin-left: auto; }

/* Order details */
.detail { flex: 1; min-width: 0; display: flex; flex-direction: column; margin: 0 3px 0 6px; padding: 7px 0 3px; }
.detail-bar { flex: none; display: flex; align-items: center; height: 55px; padding: 0 16px 2px 19px; border-radius: 4px; background: #4caf50; color: #fff; }
.detail-bar svg { width: 30px; height: 22px; fill: #fff; }
.detail-bar h2 { margin: 0 auto 0 8px; font-size: 13px; font-weight: 500; }
.action { height: 29px; margin-left: 10px; padding: 0 14px; border: 0; border-radius: 3px; background: #2196f3; color: #fff; font-size: 11px; font-weight: 700; letter-spacing: 1px; box-shadow: 0 1px 2px rgba(0, 0, 0, .3); }
.action-delete { background: #212121; }
.form { flex: 1; min-width: 0; display: flex; flex-direction: column; padding: 0 0 0 6px; }
.form h3 { font-size: 15px; line-height: 22px; font-weight: 700; margin-bottom: 1px; }
.form .second { margin-top: 9px; }
.grid { display: grid; grid-template-columns: 1fr 1fr; column-gap: 19px; }
.grid-map { flex: 1; min-height: 0; margin-top: 19px; }
.stack { padding-top: 1px; }
.spaced { margin-top: 20px; }
.field label { display: block; height: 15px; padding-left: 4px; font-size: 10px; line-height: 14px; font-style: italic; color: #757575; }
.control { display: flex; height: 27px; }
.control::before { content: ""; width: 11px; height: 16px; border: 1px solid #757575; border-right: 0; border-radius: 5px 0 0 5px; }
.control input { flex: 1; min-width: 0; padding: 2px 0 0 5px; border: 0; border-top: 1px solid #757575; background: none; font-size: 13px; color: #111; outline: 0; }
.map { position: relative; min-height: 160px; overflow: hidden; }
.map-canvas { position: absolute; inset: 0; width: 100%; height: 100%; }
.map-zoom { position: absolute; left: 9px; top: 9px; display: flex; flex-direction: column; border-radius: 3px; background: #fff; box-shadow: 0 0 2px rgba(0, 0, 0, .6); }
.map-zoom button { width: 24px; height: 24px; padding: 0; border: 0; background: none; color: #4caf50; font: 700 18px/22px "Noto Sans", sans-serif; }
.map-zoom button + button { border-top: 1px solid #ccc; }
.map text { font-family: "Noto Sans", sans-serif; paint-order: stroke; stroke: rgba(255, 235, 230, .6); stroke-width: 3px; }
.map-street { font-size: 22px; fill: #4c383b; }
.map-long { font-size: 24px; }
.map-avenue { font-size: 24px; fill: #3f2d22; }
.map-place { font-size: 24px; font-style: italic; fill: #7d6633; }
.map-university { font-size: 28px; }
.map .map-metro { font-size: 24px; font-weight: 700; fill: #7159ad; }
```
